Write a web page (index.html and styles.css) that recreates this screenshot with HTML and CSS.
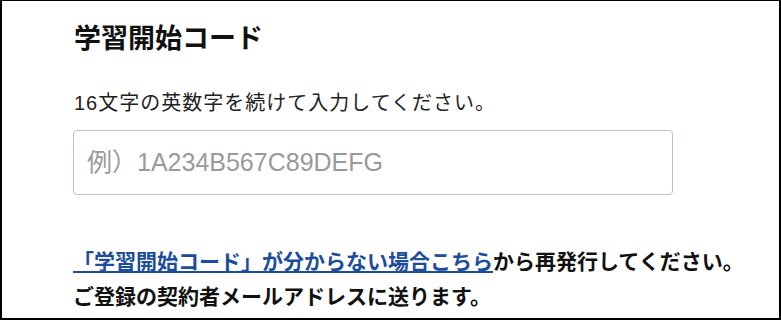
FILE: index.html
```html
<!DOCTYPE html>
<html lang="ja">
<head>
  <meta charset="UTF-8" />
  <meta name="viewport" content="width=device-width, initial-scale=1.0"/>
  <title>学習開始コード</title>
  <link rel="stylesheet" href="styles.css">
</head>
<body>
  <div class="frame">
    <div class="code-form">
      <h2>学習開始コード</h2>
      <p class="hint">16文字の英数字を続けて入力してください。</p>
      <input type="text" class="code-input" placeholder="例）1A234B567C89DEFG" maxlength="16">
      <p class="reissue">
        <a href="#">「学習開始コード」が分からない場合こちら</a>から再発行してください。<br>
        ご登録の契約者メールアドレスに送ります。
      </p>
    </div>
  </div>
</body>
</html>
```

FILE: styles.css
```css
html, body {
  margin: 0; padding: 0;
  background: #fff;
}
body {
  font-family: "Liberation Sans", "Noto Sans CJK JP", sans-serif;
  color: #222;
}
.frame {
  width: 781px; height: 320px;
  box-sizing: border-box;
  border: 2px solid #000;
  border-top-width: 1px;
  overflow: hidden;
}
.code-form {
  padding: 19px 0 0 71px;
}
.code-form h2 {
  margin: 0 0 0 1px;
  font-size: 27px;
  font-weight: bold;
  color: #111;
  line-height: 38px;
}
.hint {
  margin: 31px 0 0 1px;
  font-size: 20px;
  letter-spacing: 1px;
  line-height: 28px;
  color: #222;
}
.code-input {
  display: block;
  width: 600px; height: 65px;
  margin-top: 13px;
  box-sizing: border-box;
  padding: 0 13px;
  border: 1px solid #b9c2ce;
  border-radius: 4px;
  font-family: "Liberation Sans", "Noto Sans CJK JP", sans-serif;
  font-size: 25px;
  outline: none;
}
.code-input::placeholder {
  color: #9a9a9a;
}
.reissue {
  margin: 49px 0 0 0;
  font-size: 21px;
  font-weight: bold;
  line-height: 35px;
  color: #111;
}
.reissue a {
  color: #1c4c9c;
  text-decoration: underline;
}
```
